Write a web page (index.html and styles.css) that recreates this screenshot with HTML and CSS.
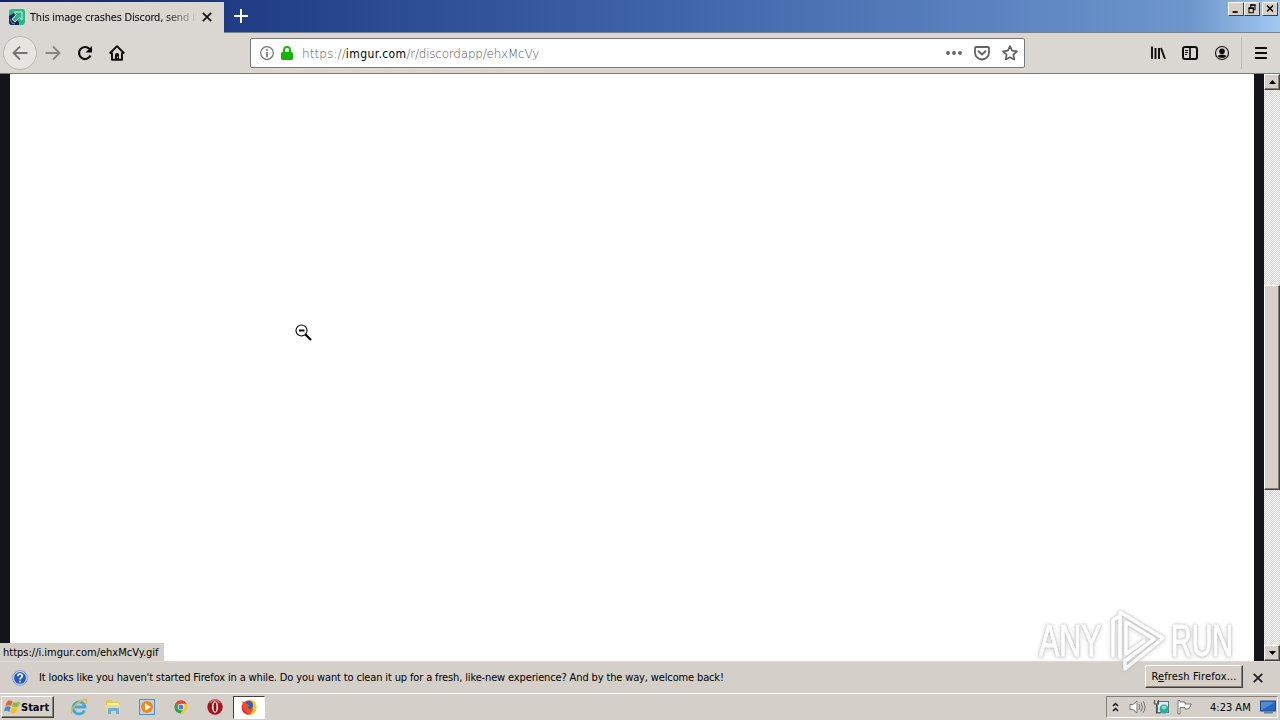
FILE: index.html
```
<!DOCTYPE html>
<html lang="en">
<head>
    <meta charset="UTF-8">
    <title>This image crashes Discord, send it</title>
    <link rel="stylesheet" href="styles.css">
</head>
<body>
    <div class="titlebar">
        <div class="tab">
            <svg class="favicon" width="16" height="16" viewBox="0 0 16 16">
                <rect width="16" height="16" rx="3" fill="#25b987"/>
                <path d="M0 7L5 4L7 10L10 13V16H3Q0 16 0 13z" fill="#16265e"/>
                <path d="M5 3h8v8l-2.500-2.500L6 13l-3-3 4.500-4.500z" fill="#25b987" stroke="#d8f6e9"/>
                <path d="M1 10l2 4 3 1" fill="none" stroke="#7592c9"/>
            </svg>
            <span class="tab-title">This image crashes Discord, send it</span>
            <svg class="tab-close" width="10" height="10" viewBox="0 0 10 10"><path d="M.8.8l8.400 8.400M9.200.8L.8 9.200" stroke="#111" stroke-width="1.700"/></svg>
        </div>
        <svg class="new-tab" width="14" height="14" viewBox="0 0 14 14"><path d="M7 0v14M0 7h14" stroke="#fff" stroke-width="2"/></svg>
        <div class="window-buttons">
            <svg width="16" height="14" viewBox="0 0 16 14"><path d="M4 10.500h6" stroke="#000" stroke-width="2"/></svg>
            <svg width="16" height="14" viewBox="0 0 16 14"><path d="M6.500 5V2.500h5V8H10M4.500 6h5v5.500h-5z" fill="none" stroke="#000" stroke-width="1.200"/><path d="M6 2.500h6M4 6h6" stroke="#000" stroke-width="2"/></svg>
            <svg class="close" width="16" height="14" viewBox="0 0 16 14"><path d="M4.500 3l7 7M11.500 3l-7 7" stroke="#000" stroke-width="1.600"/></svg>
        </div>
    </div>

    <div class="toolbar">
        <div class="back">
            <svg width="16" height="16" viewBox="0 0 16 16"><path d="M15.500 8H1.500M8 1.500L1.500 8L8 14.500" fill="none" stroke="#777572" stroke-width="1.800"/></svg>
        </div>
        <svg class="forward" width="16" height="16" viewBox="0 0 16 16"><path d="M.5 8h14M8 1.500L14.500 8L8 14.500" fill="none" stroke="#888581" stroke-width="1.800"/></svg>
        <svg class="reload" width="16" height="16" viewBox="0 0 16 16"><path d="M13.500 10.500A6 6 0 1 1 12.500 4" fill="none" stroke="#0c0c0d" stroke-width="2.200"/><path d="M15 1v6.500H8.500z" fill="#0c0c0d"/></svg>
        <svg class="home" width="16" height="16" viewBox="0 0 16 16"><path d="M.7 8.500L8 1.200l7.300 7.300M3 7.500v7.300h10V7.500" fill="none" stroke="#0c0c0d" stroke-width="1.900" stroke-linejoin="round"/><path d="M6 15V9.500Q6 8 8 8t2 1.500V15z" fill="#0c0c0d"/><path d="M8.700 11.500v1.500" stroke="#dad6d1"/></svg>
        <div class="url-bar">
            <svg width="14" height="14" viewBox="0 0 14 14"><circle cx="7" cy="7" r="6.300" fill="none" stroke="#737373" stroke-width="1.200"/><path d="M7 6v5M7 3v1.800" stroke="#737373" stroke-width="1.700"/></svg>
            <svg class="lock" width="12" height="14" viewBox="0 0 12 14"><path d="M3 7V4a3 3 0 0 1 6 0v3" fill="none" stroke="#12bc00" stroke-width="2"/><rect y="6" width="12" height="8" rx="1.500" fill="#12b800"/></svg>
            <div class="url"><span class="scheme">https://</span><b>imgur.com</b>/r/discordapp/ehxMcVy</div>
            <svg class="dots" width="16" height="16" viewBox="0 0 16 16" fill="#626262"><circle cx="2" cy="8" r="1.900"/><circle cx="8" cy="8" r="1.900"/><circle cx="14" cy="8" r="1.900"/></svg>
            <svg class="pocket" width="16" height="16" viewBox="0 0 16 16" fill="none" stroke="#626262"><path d="M2.300 2h11.400Q15 2 15 3.300V7.500a7 7 0 0 1-14 0V3.300Q1 2 2.300 2z" stroke-width="1.800"/><path d="M4.500 6.200L8 9.500l3.500-3.300" stroke-width="1.900" stroke-linecap="round" stroke-linejoin="round"/></svg>
            <svg width="16" height="16" viewBox="0 0 16 16"><path d="M8 1.200l2.100 4.500 4.900.6-3.600 3.400.9 4.900L8 12.200l-4.300 2.400.9-4.900L1 6.300l4.900-.6z" fill="none" stroke="#626262" stroke-width="1.700" stroke-linejoin="round"/></svg>
        </div>
        <div class="tools">
            <svg width="16" height="16" viewBox="0 0 16 16"><path d="M2 1.500v12.500M5.500 3v11M9 3v11M11 3l4 11" stroke="#0c0c0d" stroke-width="1.900"/></svg>
            <svg width="16" height="16" viewBox="0 0 16 16"><rect x="1" y="2" width="14" height="12" rx="2" fill="none" stroke="#0c0c0d" stroke-width="2"/><path d="M8 2v12" stroke="#0c0c0d" stroke-width="1.700"/><path d="M3 5.500h3M3 7.500h3M3 9.500h2" stroke="#0c0c0d"/></svg>
            <svg width="16" height="16" viewBox="0 0 16 16"><circle cx="8" cy="8" r="6.500" fill="none" stroke="#0c0c0d" stroke-width="1.100"/><circle cx="8" cy="6.200" r="2.800" fill="#0c0c0d"/><path d="M3.500 11Q5 9.500 8 9.500t4.500 1.500Q11 13 8 13T3.500 11z" fill="#0c0c0d"/></svg>
        </div>
        <div class="menu">
            <svg width="12" height="12" viewBox="0 0 12 12"><path d="M0 1h12M0 6h12M0 11h12" stroke="#0c0c0d" stroke-width="2"/></svg>
        </div>
    </div>

    <div class="content">
        <div class="page"></div>
        <div class="scrollbar">
            <div class="scroll-button"><svg width="7" height="4" viewBox="0 0 7 4"><path d="M0 4L3.500 0L7 4z"/></svg></div>
            <div class="thumb"></div>
            <div class="scroll-button"><svg width="7" height="4" viewBox="0 0 7 4"><path d="M0 0h7L3.500 4z"/></svg></div>
        </div>
        <div class="status">https://i.imgur.com/ehxMcVy.gif</div>
        <svg class="cursor" width="17" height="17" viewBox="0 0 17 17"><circle cx="6.500" cy="6.500" r="5.500" fill="#fff" stroke="#000" stroke-width="1.100"/><path d="M4 6.500h5.500" stroke="#000" stroke-width="2"/><path d="M10.500 10.500l5.500 5.500" stroke="#000" stroke-width="2.200"/></svg>
    </div>

    <div class="notification">
        <svg class="question" width="16" height="16" viewBox="0 0 16 16"><circle cx="8" cy="8" r="7.400" fill="#dce8fa" stroke="#7594c8"/><circle cx="8" cy="8" r="6" fill="#2458c3"/><path d="M5.700 6.300Q5.700 4 8 4t2.300 2.100C10.300 7.700 8 7.700 8 9.500M8 10.700v1.800" fill="none" stroke="#fff" stroke-width="1.700"/></svg>
        <div class="message">It looks like you haven't started Firefox in a while. Do you want to clean it up for a fresh, like-new experience? And by the way, welcome back!</div>
        <div class="refresh">R<u>e</u>fresh Firefox...</div>
        <svg width="10" height="10" viewBox="0 0 10 10"><path d="M.8.8l8.400 8.400M9.200.8L.8 9.200" stroke="#222" stroke-width="1.800"/></svg>
    </div>

    <div class="taskbar">
        <div class="start">
            <svg width="17" height="16" viewBox="0 0 17 16"><path d="M3 2.500Q6 .5 8.500 2.500L7 7Q4.500 5.500 1.500 7z" fill="#e8602c"/><path d="M9.500 3Q12 4.500 16 2.500L14.300 7.500Q11 9 8 7.400z" fill="#8abb3b"/><path d="M1.200 8Q4.200 6.500 6.700 8L5.200 13Q3 11 0 12.500z" fill="#378fd2"/><path d="M7.700 8.400Q11 10 14 8.500L12.500 13.300Q9.500 15 6.200 13.300z" fill="#f5bd2b"/></svg>
            <span>Start</span>
        </div>
        <div class="launch">
            <svg width="18" height="18" viewBox="0 0 18 18"><path d="M14.500 12.500A6 6 0 1 1 15 9H5" fill="none" stroke="#40a9df" stroke-width="2.800"/><path d="M2 16C-1 12 8 3 15 1.500c3-.5 2 3 .5 4.500" fill="none" stroke="#e5b83c" stroke-width="1.400"/></svg>
            <svg width="18" height="18" viewBox="0 0 18 18"><path d="M2 2h6l1 2h7v10H2z" fill="#e9c45c"/><path d="M3 5h12v3H3z" fill="#fff3b7"/><path d="M2 7h14v7H2z" fill="#f4d985"/><path d="M4 16v-5q0-1 1-1h9q1 0 1 1v5h-3v-3H7v3z" fill="#68b0df"/></svg>
            <svg width="18" height="18" viewBox="0 0 18 18"><rect x="1.500" y="1.500" width="15" height="15" fill="#b9d5ed" stroke="#5290ca"/><circle cx="9" cy="9" r="6" fill="#f28a16"/><path d="M7 5.500v7l6-3.500z" fill="#fff"/></svg>
            <svg width="18" height="18" viewBox="0 0 18 18"><circle cx="9" cy="9" r="6.500" fill="#f3ca2c"/><path d="M9 9L3.300 5.700A6.500 6.500 0 0 1 14.700 5.700H9z" fill="#df4937"/><path d="M3.300 5.700A6.500 6.500 0 0 0 8.700 15.500L11 11 9 9z" fill="#35a055"/><circle cx="9" cy="9" r="3.200" fill="#fff"/><circle cx="9" cy="9" r="2.500" fill="#4485da"/></svg>
            <svg width="18" height="18" viewBox="0 0 18 18"><circle cx="9" cy="9" r="7.700" fill="#a8141c"/><path d="M4 5Q9-1 14 5" fill="none" stroke="#d76a6c" stroke-width="1.500"/><ellipse cx="9" cy="9" rx="3" ry="5.700" fill="#fff"/><ellipse cx="9" cy="9" rx="1.500" ry="4.800" fill="#8b1018"/></svg>
        </div>
        <div class="task">
            <svg width="18" height="18" viewBox="0 0 18 18"><circle cx="9" cy="9.500" r="7.300" fill="#f4511f"/><path d="M10 2c4-1 7 4 6.300 8.500C16 14 13 17 9 17c4-3 5-7 1-15z" fill="#ffc52e"/><path d="M1.800 7Q1 16 9 17q-5-4-4-8z" fill="#e52d51"/><circle cx="9" cy="7" r="4" fill="#2e62b7"/><path d="M2.500 3l3 2 4 2.500-2 1 1 2q3 1.500 5-1-1 5-6 4.500-5-2-5-7z" fill="#f4511f"/></svg>
        </div>
        <div class="tray">
            <svg class="chevrons" width="7" height="10" viewBox="0 0 7 10"><path d="M1 4l2.500-2.500L6 4M1 9l2.500-2.500L6 9" fill="none" stroke="#000" stroke-width="1.400"/></svg>
            <svg class="volume" width="17" height="16" viewBox="0 0 17 16" fill="none" stroke="#777"><path d="M1 5.500h3L8 2v12l-4-3.500H1z" fill="#fff"/><path d="M10 5q2 3 0 6M12 3.500q3 4.500 0 9M14 2q4 6 0 12"/></svg>
            <svg class="network" width="17" height="16" viewBox="0 0 17 16"><rect x="4.500" y="2.500" width="11" height="11" fill="#d8eff2" stroke="#55777c"/><path d="M1.500 1v4h4V1M3.500 5v9h4" fill="none" stroke="#555" stroke-width="1.200"/><circle cx="11" cy="10" r="4.500" fill="#2caaa0"/><path d="M8 8q3-3 6 0l-3 3z" fill="#91dbc3"/></svg>
            <svg class="flag" width="17" height="16" viewBox="0 0 17 16"><path d="M2 1.500h2V3h5v2h6.500l-3 5H9V8.500H4V15H2z" fill="#fff" stroke="#777"/></svg>
            <span class="clock">4:23 AM</span>
            <svg class="desktop" width="16" height="14" viewBox="0 0 16 14"><rect x=".5" y="1" width="15" height="10" fill="#2866bd" stroke="#284a83"/><path d="M1 2h14L2 10H1z" fill="#4e8bd6"/><path d="M4 12.500h9" stroke="#69809d" stroke-width="2"/></svg>
        </div>
    </div>

    <div class="watermark">
        <span class="any">ANY</span>
        <svg width="60" height="66" viewBox="0 0 60 66" fill="none" stroke="#fff" stroke-width="3.500" stroke-linejoin="round" stroke-linecap="round"><path d="M5 48V12l5-3M12 50V4l43 26-38 31v-8l29-22-28-17v32l18-13"/></svg>
        <span class="run">RUN</span>
    </div>
</body>
</html>
```

FILE: styles.css
```
* {
    box-sizing: border-box;
}
body {
    margin: 0;
    width: 1280px;
    height: 720px;
    overflow: hidden;
    position: relative;
    display: flex;
    flex-direction: column;
    background-color: #d5cfc9;
    color: #000;
    font-family: "DejaVu Sans Condensed", "DejaVu Sans", sans-serif;
    font-stretch: condensed;
    font-size: 11px;
    white-space: nowrap;
}
svg {
    display: block;
    flex-shrink: 0;
}
.titlebar {
    height: 33px;
    display: flex;
    align-items: flex-start;
    background: linear-gradient(90deg, #102370 0, #203d85 240px, #4267ac 700px, #6d96cc 1190px, #a2c8f2 1280px);
    border-bottom: 1px solid #7b8189;
}
.tab {
    width: 224px;
    height: 31px;
    margin-top: 2px;
    padding: 0 12px 0 9px;
    display: flex;
    align-items: center;
    background-color: #dad6d1;
}
.tab-title {
    width: 167px;
    margin-left: 5px;
    overflow: hidden;
    letter-spacing: -0.22px;
    -webkit-mask-image: linear-gradient(90deg, #000 135px, transparent 167px);
    mask-image: linear-gradient(90deg, #000 135px, transparent 167px);
}
.favicon,
.tab-close {
    margin-bottom: 2px;
}
.tab-close {
    margin-left: 5px;
}
.new-tab {
    margin: 9px 0 0 10px;
}
.window-buttons {
    display: flex;
    margin: 2px 2px 0 auto;
}
.window-buttons svg {
    background-color: #d6d0c9;
    border: 1px solid;
    border-color: #fff #404040 #404040 #fff;
}
.window-buttons .close {
    margin-left: 2px;
}
.toolbar {
    height: 41px;
    display: flex;
    align-items: center;
    background-color: #dad6d1;
    border-bottom: 1px solid #777;
}
.back {
    width: 34px;
    height: 34px;
    margin-left: 3px;
    display: flex;
    align-items: center;
    justify-content: center;
    background-color: #e7e4e1;
    border: 1px solid #bbb7b3;
    border-radius: 50%;
}
.forward {
    margin-left: 8px;
}
.reload,
.home {
    margin-left: 16px;
}
.url-bar {
    width: 775px;
    height: 30px;
    margin-left: 125px;
    padding: 0 6px 0 9px;
    display: flex;
    align-items: center;
    background-color: #fff;
    border: 1px solid #777;
    border-radius: 2px;
}
.lock {
    margin-left: 7px;
}
.url {
    margin: 2px 0 0 9px;
    color: #555;
    font-family: "DejaVu Sans", sans-serif;
    font-weight: 200;
    font-size: 12px;
    letter-spacing: -0.22px;
}
.scheme {
    letter-spacing: 0.1px;
}
.url b {
    color: #000;
    font-weight: normal;
    letter-spacing: 0.4px;
}
.dots {
    margin-left: auto;
}
.pocket {
    margin: 0 12px;
}
.tools {
    margin-left: auto;
    display: flex;
    gap: 16px;
}
.menu {
    height: 32px;
    margin-left: 11px;
    padding: 0 13px;
    display: flex;
    align-items: center;
    border-left: 1px solid #c0bcb8;
}
.content {
    height: 587px;
    position: relative;
    display: flex;
}
.page {
    width: 1264px;
    background-color: #fff;
    border: solid #141518;
    border-width: 0 10px;
}
.scrollbar {
    width: 16px;
    display: flex;
    flex-direction: column;
    background: repeating-conic-gradient(#d5cfc8 0 25%, #fff 0 50%) 0 0 / 2px 2px;
}
.scroll-button {
    height: 16px;
    display: flex;
    align-items: center;
    justify-content: center;
}
.scroll-button:last-child {
    margin-top: auto;
}
.scroll-button,
.thumb,
.refresh,
.start {
    background-color: #d6d0c9;
    border: 1px solid;
    border-color: #fff #404040 #404040 #fff;
    box-shadow: inset -1px -1px #858078;
}
.thumb {
    height: 205px;
    margin-top: 195px;
}
.status {
    position: absolute;
    left: 0;
    bottom: 0;
    width: 164px;
    height: 18px;
    padding-left: 3px;
    line-height: 20px;
    background-color: #d5cfc9;
}
.cursor {
    position: absolute;
    left: 295px;
    top: 250px;
}
.notification {
    height: 32px;
    padding: 0 17px 0 12px;
    display: flex;
    align-items: center;
    border-top: 1px solid #dedad5;
}
.message {
    margin-left: 11px;
    letter-spacing: -0.14px;
}
.refresh {
    width: 98px;
    height: 23px;
    margin: 0 10px 2px auto;
    line-height: 21px;
    text-align: center;
    letter-spacing: 0.15px;
}
.taskbar {
    height: 27px;
    display: flex;
    align-items: center;
    border-top: 1px solid #fff;
}
.start {
    width: 53px;
    height: 22px;
    margin-left: 1px;
    padding-left: 2px;
    display: flex;
    align-items: center;
    font-weight: bold;
}
.launch {
    display: flex;
    gap: 16px;
    margin-left: 16px;
}
.task {
    width: 32px;
    height: 23px;
    margin-left: 9px;
    display: flex;
    align-items: center;
    justify-content: center;
    background-color: #fff;
    border: 1px solid;
    border-color: #404040 #fff #fff #404040;
}
.tray {
    width: 172px;
    height: 22px;
    margin: 0 2px 0 auto;
    padding: 0 1px 0 5px;
    display: flex;
    align-items: center;
    border: 1px solid;
    border-color: #858078 #fff #fff #858078;
}
.volume {
    margin-left: 10px;
}
.network {
    margin-left: 7px;
}
.flag {
    margin-left: 6px;
}
.clock {
    margin-left: 17px;
}
.desktop {
    margin-left: auto;
}
.watermark {
    position: absolute;
    left: 1039px;
    top: 608px;
    display: flex;
    align-items: center;
    color: #fff;
    font-family: "Liberation Sans", Arial, sans-serif;
    font-size: 44px;
    -webkit-text-stroke: 1px #fff;
    filter: drop-shadow(0 0 1px #aaa) drop-shadow(0 1px 2px #ccc);
    opacity: 0.8;
}
.watermark svg {
    margin: 0 3px 0 5px;
}
.any,
.run {
    width: 64px;
    transform: scaleX(0.69);
    transform-origin: left;
}
.run {
    transform: scaleX(0.65);
}
```
